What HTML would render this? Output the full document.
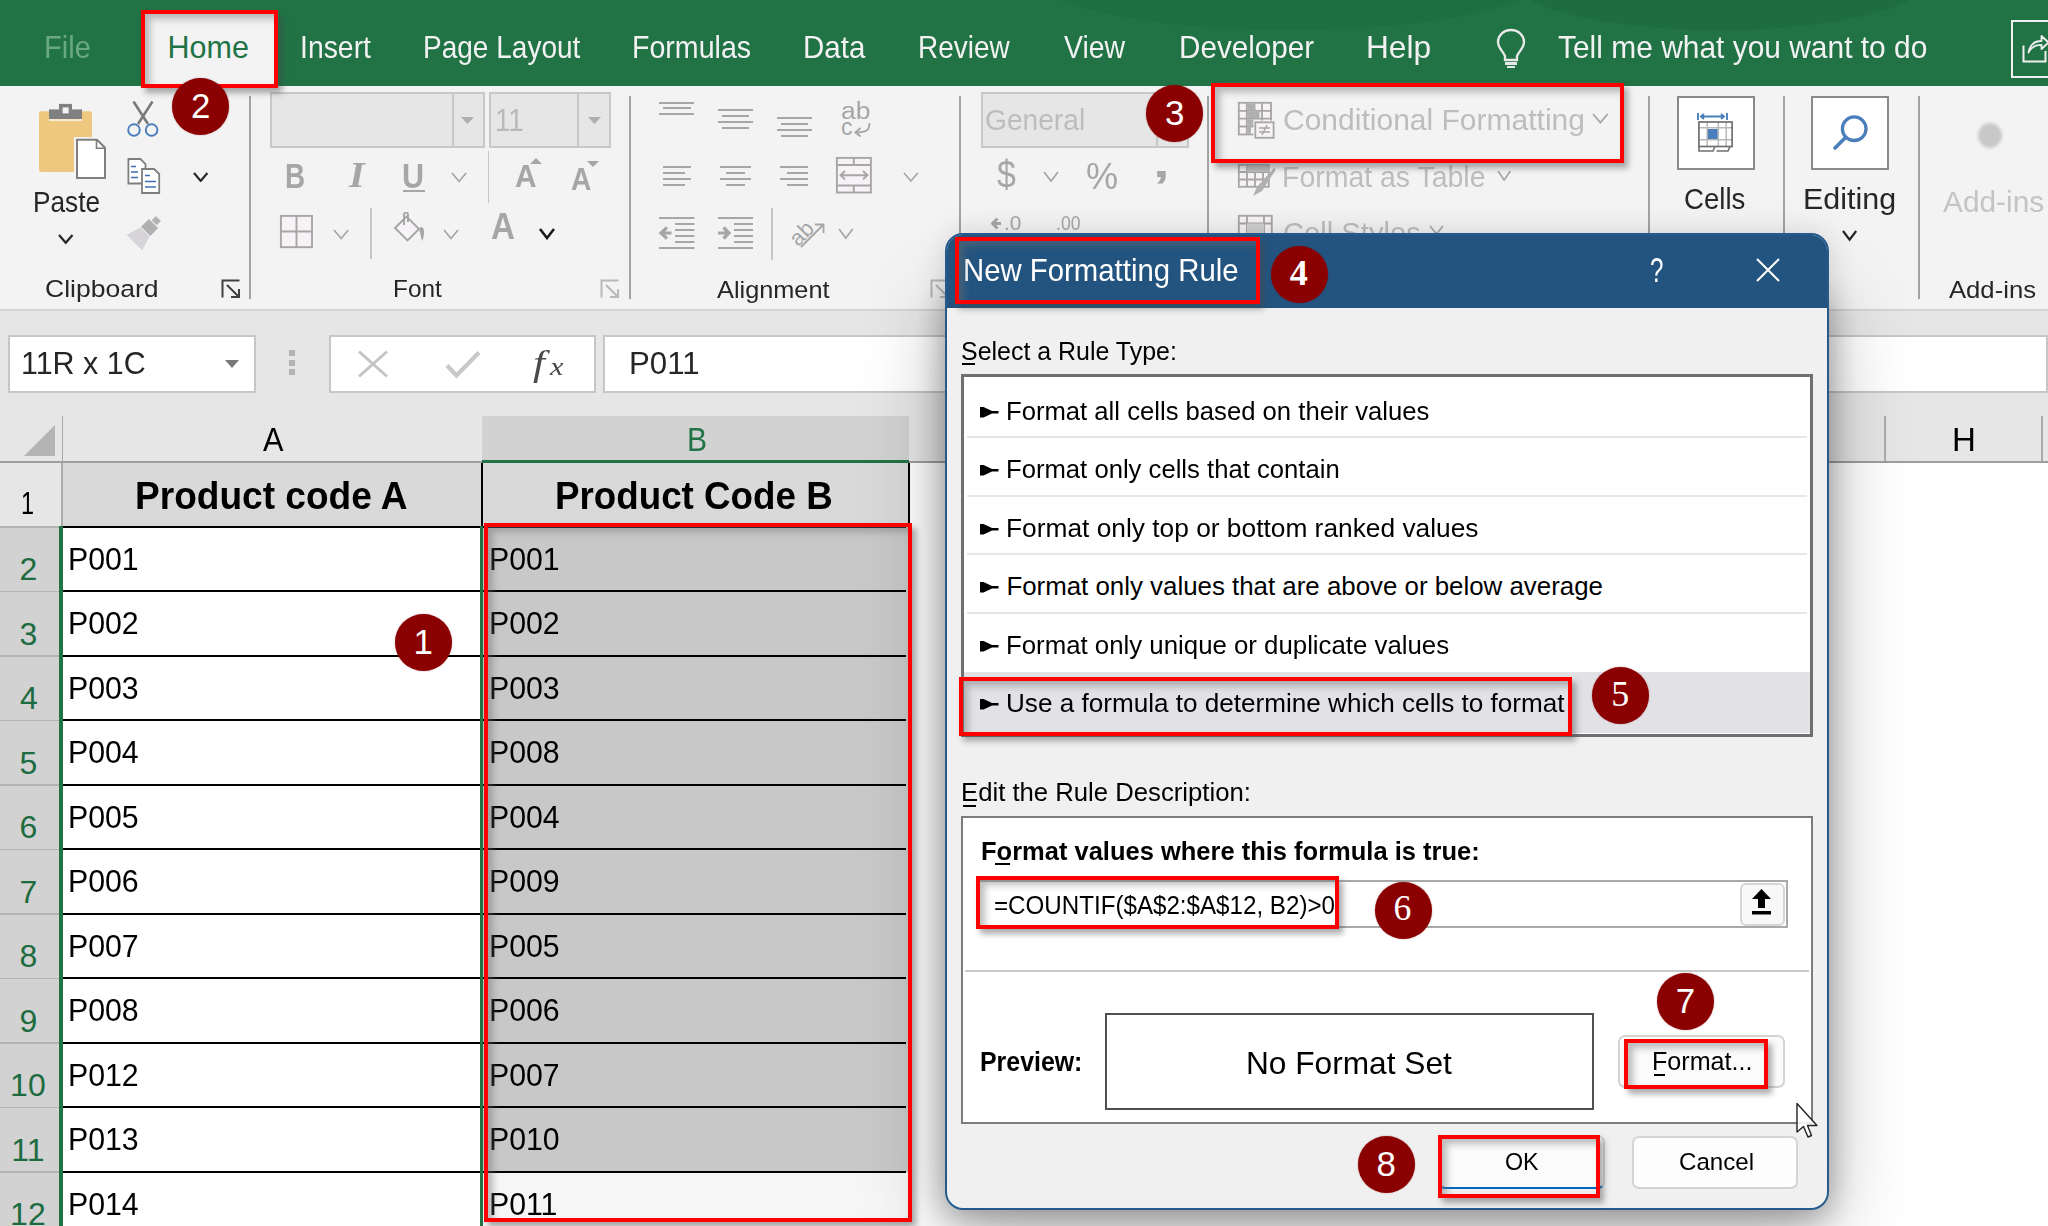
<!DOCTYPE html><html><head><meta charset="utf-8"><style>
*{margin:0;padding:0}
html,body{width:2048px;height:1226px;overflow:hidden;background:#fff;position:relative;font-family:"Liberation Sans",sans-serif}
.a{position:absolute}
.t{position:absolute;white-space:pre;transform-origin:0 0}
.badge{position:absolute;border-radius:50%;background:#8b0000;box-shadow:0 0 1.5px rgba(120,0,0,.5)}
.rb{position:absolute;border:4px solid #ff0000;box-sizing:border-box;box-shadow:4px 5px 6px rgba(70,70,70,.45), inset 5px 5px 7px rgba(110,110,110,.45)}
</style></head><body><div class="a" style="left:0px;top:0px;width:2048px;height:86px;background:#217346;"></div>
<div class="a" style="left:1040px;top:-72px;width:500px;height:102px;border-radius:50%;background:#1f6a41;opacity:.55"></div>
<div class="a" style="left:1510px;top:-74px;width:420px;height:104px;border-radius:50%;background:#1e6640;opacity:.6"></div>
<div class="a" style="left:141px;top:10px;width:137px;height:78px;background:#f3f3f3;"></div>
<div class="t" style="left:44.10px;top:32.16px;font-size:30.524px;line-height:30.524px;color:#6aa882;font-weight:normal;font-style:normal;transform:scaleX(0.9524);">File</div>
<div class="t" style="left:167.50px;top:32.16px;font-size:30.524px;line-height:30.524px;color:#217346;font-weight:normal;font-style:normal;">Home</div>
<div class="t" style="left:299.94px;top:32.16px;font-size:30.524px;line-height:30.524px;color:#f2f2f2;font-weight:normal;font-style:normal;transform:scaleX(0.9300);">Insert</div>
<div class="t" style="left:423.16px;top:32.16px;font-size:30.524px;line-height:30.524px;color:#f2f2f2;font-weight:normal;font-style:normal;transform:scaleX(0.9182);">Page Layout</div>
<div class="t" style="left:632.13px;top:32.16px;font-size:30.524px;line-height:30.524px;color:#f2f2f2;font-weight:normal;font-style:normal;transform:scaleX(0.9366);">Formulas</div>
<div class="t" style="left:802.67px;top:32.16px;font-size:30.524px;line-height:30.524px;color:#f2f2f2;font-weight:normal;font-style:normal;transform:scaleX(0.9666);">Data</div>
<div class="t" style="left:918.17px;top:32.16px;font-size:30.524px;line-height:30.524px;color:#f2f2f2;font-weight:normal;font-style:normal;transform:scaleX(0.9160);">Review</div>
<div class="t" style="left:1064.00px;top:32.16px;font-size:30.524px;line-height:30.524px;color:#f2f2f2;font-weight:normal;font-style:normal;transform:scaleX(0.9316);">View</div>
<div class="t" style="left:1178.76px;top:32.16px;font-size:30.524px;line-height:30.524px;color:#f2f2f2;font-weight:normal;font-style:normal;transform:scaleX(0.9713);">Developer</div>
<div class="t" style="left:1365.93px;top:32.16px;font-size:30.524px;line-height:30.524px;color:#f2f2f2;font-weight:normal;font-style:normal;transform:scaleX(1.0370);">Help</div>
<div class="t" style="left:1557.60px;top:32.16px;font-size:30.524px;line-height:30.524px;color:#f2f2f2;font-weight:normal;font-style:normal;transform:scaleX(0.9809);">Tell me what you want to do</div>
<svg class="a" style="left:1494px;top:27px;" width="34" height="44" viewBox="0 0 34 44"><path d="M17 3 C9 3 4 9 4 15 C4 21 9 24 11 29 L11 33 L23 33 L23 29 C25 24 30 21 30 15 C30 9 25 3 17 3 Z" fill="none" stroke="#e8e8e8" stroke-width="2.4"/><rect x="11" y="35" width="12" height="3" fill="#e8e8e8"/><rect x="13" y="39" width="8" height="2" fill="#e8e8e8"/></svg>
<div class="a" style="left:2011px;top:20px;width:60px;height:58px;border:2px solid #f0f0f0;box-sizing:border-box"></div>
<svg class="a" style="left:2018px;top:30px;" width="30" height="40" viewBox="0 0 30 40"><path d="M5.5 15.5 L5.5 31.5 L27.5 31.5 L27.5 21" fill="none" stroke="#f0f0f0" stroke-width="2"/><path d="M10.5 22.5 C12 14.5 17 11 23.5 11 L23.5 6 L30.5 12.5 L23.5 19 L23.5 14.8 C17.5 14.8 13 17.5 10.5 22.5 Z" fill="none" stroke="#f0f0f0" stroke-width="1.8" stroke-linejoin="round"/></svg>
<div class="a" style="left:0px;top:86px;width:2048px;height:223px;background:#f3f3f3;"></div>
<div class="a" style="left:0px;top:309px;width:2048px;height:2px;background:#d4d4d4;"></div>
<div class="a" style="left:0px;top:311px;width:2048px;height:151px;background:#e6e6e6;"></div>
<div class="a" style="left:249px;top:96px;width:2px;height:203px;background:#a3a3a3;"></div>
<div class="a" style="left:629px;top:96px;width:2px;height:203px;background:#a3a3a3;"></div>
<div class="a" style="left:959px;top:96px;width:2px;height:203px;background:#a3a3a3;"></div>
<div class="a" style="left:1207px;top:96px;width:2px;height:203px;background:#a3a3a3;"></div>
<div class="a" style="left:1648px;top:96px;width:2px;height:203px;background:#a3a3a3;"></div>
<div class="a" style="left:1783px;top:96px;width:2px;height:203px;background:#a3a3a3;"></div>
<div class="a" style="left:1918px;top:96px;width:2px;height:203px;background:#a3a3a3;"></div>
<div class="t" style="left:44.93px;top:277.28px;font-size:24.710px;line-height:24.710px;color:#262626;font-weight:normal;font-style:normal;transform:scaleX(1.0731);">Clipboard</div>
<div class="t" style="left:392.73px;top:277.18px;font-size:24.710px;line-height:24.710px;color:#262626;font-weight:normal;font-style:normal;transform:scaleX(0.9860);">Font</div>
<div class="t" style="left:716.60px;top:277.78px;font-size:24.710px;line-height:24.710px;color:#262626;font-weight:normal;font-style:normal;transform:scaleX(1.0247);">Alignment</div>
<div class="t" style="left:1948.80px;top:277.58px;font-size:24.710px;line-height:24.710px;color:#262626;font-weight:normal;font-style:normal;transform:scaleX(1.0383);">Add-ins</div>
<svg class="a" style="left:38px;top:102px;" width="70" height="78" viewBox="0 0 70 78">
      <rect x="1" y="9.3" width="53" height="60.7" rx="2" fill="#edc87e"/>
      <rect x="11" y="7.4" width="33" height="9.7" fill="#808080"/>
      <rect x="21" y="1.9" width="13" height="6" fill="#808080"/>
      <rect x="24.6" y="5.4" width="6" height="6" fill="#f3f3f3"/>
      <rect x="11" y="17.1" width="33" height="2" fill="#f7ebd0"/>
      <rect x="36" y="35" width="32" height="42" fill="#f3f3f3"/>
      <path d="M39 37.7 L59 37.7 L67 45.7 L67 75.9 L39 75.9 Z" fill="#fff" stroke="#7f7f7f" stroke-width="2"/>
      <path d="M58.5 37.7 L58.5 46.2 L67 46.2" fill="none" stroke="#7f7f7f" stroke-width="1.6"/></svg>
<div class="t" style="left:32.74px;top:187.27px;font-size:29.797px;line-height:29.797px;color:#262626;font-weight:normal;font-style:normal;transform:scaleX(0.8805);">Paste</div>
<svg class="a" style="left:56.7px;top:233.3px;" width="17.5" height="11.799999999999983" viewBox="0 0 17.5 11.799999999999983"><path d="M2 2 L8.75 9.799999999999983 L15.5 2" fill="none" stroke="#262626" stroke-width="2.2"/></svg>
<svg class="a" style="left:126px;top:100px;" width="34" height="38" viewBox="0 0 34 38">
      <path d="M7.5 1.5 L22 24 M26.5 1.5 L12 24" stroke="#7a7a7a" stroke-width="2.6" fill="none"/>
      <circle cx="8" cy="30" r="5.8" fill="none" stroke="#4a7ebb" stroke-width="1.9"/>
      <circle cx="25.6" cy="30" r="5.8" fill="none" stroke="#4a7ebb" stroke-width="1.9"/></svg>
<svg class="a" style="left:126px;top:157px;" width="36" height="38" viewBox="0 0 36 38">
      <path d="M2.4 2 L14.5 2 L19.5 7 L19.5 26.5 L2.4 26.5 Z" fill="#fff" stroke="#7f7f7f" stroke-width="1.8"/>
      <path d="M5 9.5 H10 M5 15 H12 M5 20.5 H12" stroke="#3e6fb0" stroke-width="1.6"/>
      <path d="M16 12 L28 12 L33.2 17 L33.2 36 L16 36 Z" fill="#fff" stroke="#7f7f7f" stroke-width="1.8"/>
      <path d="M19 18.5 H24 M19 24.5 H30 M19 30 H30" stroke="#3e6fb0" stroke-width="1.6"/></svg>
<svg class="a" style="left:191.6px;top:170.6px;" width="17.400000000000006" height="11.900000000000006" viewBox="0 0 17.400000000000006 11.900000000000006"><path d="M2 2 L8.700000000000003 9.900000000000006 L15.400000000000006 2" fill="none" stroke="#262626" stroke-width="2.2"/></svg>
<svg class="a" style="left:126px;top:214px;" width="38" height="36" viewBox="0 0 38 36">
      <g transform="translate(19 18) rotate(45)">
      <rect x="-3.5" y="-19" width="7" height="6" fill="#b4b4b4"/>
      <rect x="-6.5" y="-12" width="13" height="11" fill="#b0b0b0"/>
      <path d="M-6.5 0 L6.5 0 L11 15 L-11 15 Z" fill="#d6d4d8"/>
      </g></svg>
<svg class="a" style="left:220.5px;top:279px;" width="21" height="20" viewBox="0 0 21 20"><path d="M1.5 18.5 L1.5 1.5 L18.5 1.5" fill="none" stroke="#404040" stroke-width="2"/><path d="M6 6 L18 18 M18 10 L18 18 L10 18" fill="none" stroke="#404040" stroke-width="2"/></svg>
<svg class="a" style="left:600px;top:279px;" width="21" height="20" viewBox="0 0 21 20"><path d="M1.5 18.5 L1.5 1.5 L18.5 1.5" fill="none" stroke="#b8b8b8" stroke-width="2"/><path d="M6 6 L18 18 M18 10 L18 18 L10 18" fill="none" stroke="#b8b8b8" stroke-width="2"/></svg>
<svg class="a" style="left:930px;top:279px;" width="21" height="20" viewBox="0 0 21 20"><path d="M1.5 18.5 L1.5 1.5 L18.5 1.5" fill="none" stroke="#b8b8b8" stroke-width="2"/><path d="M6 6 L18 18 M18 10 L18 18 L10 18" fill="none" stroke="#b8b8b8" stroke-width="2"/></svg>
<div class="a" style="left:270px;top:92.3px;width:215px;height:56.000000000000014px;background:#e6e6e6;border:2px solid #c8c8c8;box-sizing:border-box;"></div>
<div class="a" style="left:452px;top:92.3px;width:2px;height:56.000000000000014px;background:#c8c8c8;"></div>
<svg class="a" style="left:461px;top:117px;" width="13" height="7" viewBox="0 0 13 7"><path d="M0 0 L13 0 L6.5 7Z" fill="#b0b0b0"/></svg>
<div class="a" style="left:489px;top:92.3px;width:121.5px;height:56.000000000000014px;background:#e6e6e6;border:2px solid #c8c8c8;box-sizing:border-box;"></div>
<div class="a" style="left:577px;top:92.3px;width:2px;height:56.000000000000014px;background:#c8c8c8;"></div>
<svg class="a" style="left:588px;top:117px;" width="13" height="7" viewBox="0 0 13 7"><path d="M0 0 L13 0 L6.5 7Z" fill="#b0b0b0"/></svg>
<div class="t" style="left:495.19px;top:104.76px;font-size:30.524px;line-height:30.524px;color:#b9b9b9;font-weight:normal;font-style:normal;transform:scaleX(0.9057);">11</div>
<div class="t" style="left:285.47px;top:159.08px;font-size:34.158px;line-height:34.158px;color:#a6a6a6;font-weight:bold;font-style:normal;transform:scaleX(0.8136);">B</div>
<div class="t" style="left:348.92px;top:157.95px;font-size:35.890px;line-height:35.890px;color:#a6a6a6;font-weight:bold;font-style:italic;font-family:'Liberation Serif',serif;transform:scaleX(1.1187);">I</div>
<div class="t" style="left:402.41px;top:159.08px;font-size:34.158px;line-height:34.158px;color:#a6a6a6;font-weight:bold;font-style:normal;transform:scaleX(0.8952);">U</div>
<div class="a" style="left:403px;top:189.7px;width:21.69999999999999px;height:2.200000000000017px;background:#a6a6a6;"></div>
<svg class="a" style="left:449.5px;top:170.6px;" width="18.19999999999999" height="12.5" viewBox="0 0 18.19999999999999 12.5"><path d="M2 2 L9.099999999999994 10.5 L16.19999999999999 2" fill="none" stroke="#a6a6a6" stroke-width="1.7"/></svg>
<div class="a" style="left:487.5px;top:151px;width:1.5px;height:52px;background:#c6c6c6;"></div>
<div class="t" style="left:514.70px;top:161.26px;font-size:31.105px;line-height:31.105px;color:#a6a6a6;font-weight:bold;font-style:normal;transform:scaleX(0.9591);">A</div>
<svg class="a" style="left:530px;top:158px;" width="12" height="6" viewBox="0 0 12 6"><path d="M0 6 L12 6 L6 0Z" fill="#a6a6a6"/></svg>
<div class="t" style="left:571.10px;top:163.63px;font-size:30.669px;line-height:30.669px;color:#a6a6a6;font-weight:bold;font-style:normal;transform:scaleX(0.9182);">A</div>
<svg class="a" style="left:587px;top:160.5px;" width="12" height="6" viewBox="0 0 12 6"><path d="M0 0 L12 0 L6 6Z" fill="#a6a6a6"/></svg>
<svg class="a" style="left:279px;top:214px;" width="35" height="35" viewBox="0 0 35 35"><rect x="1.9" y="1.9" width="31.1" height="31.3" fill="#f6f2f6" stroke="#a6a6a6" stroke-width="1.9"/><path d="M17.5 2 V33 M2 17.5 H33" stroke="#a6a6a6" stroke-width="1.9"/></svg>
<svg class="a" style="left:332px;top:227.5px;" width="18.30000000000001" height="12.5" viewBox="0 0 18.30000000000001 12.5"><path d="M2 2 L9.150000000000006 10.5 L16.30000000000001 2" fill="none" stroke="#a6a6a6" stroke-width="1.7"/></svg>
<div class="a" style="left:370px;top:207.8px;width:1.6000000000000227px;height:51.599999999999966px;background:#c6c6c6;"></div>
<svg class="a" style="left:392px;top:212px;" width="34" height="34" viewBox="0 0 34 34">
      <path d="M3 16 L14.5 4.5 L27 17 L15.5 28.5 Z" fill="#f6f2f6" stroke="#a6a6a6" stroke-width="1.9"/>
      <path d="M12 13 L12 2.5 A2 2 0 0 1 16 2.5 L16 10" fill="none" stroke="#a6a6a6" stroke-width="1.9"/>
      <path d="M27 17 C30 13 32 16 32 20 C32 24 31 28 30 29 C29 25 28 20 27 17Z" fill="#a6a6a6"/></svg>
<svg class="a" style="left:442px;top:227.5px;" width="18" height="12.5" viewBox="0 0 18 12.5"><path d="M2 2 L9.0 10.5 L16 2" fill="none" stroke="#a6a6a6" stroke-width="1.7"/></svg>
<div class="t" style="left:490.80px;top:209.19px;font-size:36.629px;line-height:36.629px;color:#a6a6a6;font-weight:bold;font-style:normal;transform:scaleX(0.9077);">A</div>
<svg class="a" style="left:537.7px;top:227px;" width="18.0" height="13" viewBox="0 0 18.0 13"><path d="M2 2 L9.0 11 L16.0 2" fill="none" stroke="#1a1a1a" stroke-width="2.6"/></svg>
<div class="a" style="left:659px;top:101.6px;width:35.39999999999998px;height:2.0px;background:#a6a6a6;"></div>
<div class="a" style="left:663px;top:107.4px;width:27.5px;height:2.0px;background:#a6a6a6;"></div>
<div class="a" style="left:659px;top:113.3px;width:35.39999999999998px;height:2.0px;background:#a6a6a6;"></div>
<div class="a" style="left:718px;top:109px;width:34.60000000000002px;height:2px;background:#a6a6a6;"></div>
<div class="a" style="left:722px;top:115px;width:26.5px;height:2px;background:#a6a6a6;"></div>
<div class="a" style="left:718px;top:121px;width:34.60000000000002px;height:2px;background:#a6a6a6;"></div>
<div class="a" style="left:722px;top:127px;width:26.5px;height:2px;background:#a6a6a6;"></div>
<div class="a" style="left:776.6px;top:117px;width:35.10000000000002px;height:2px;background:#a6a6a6;"></div>
<div class="a" style="left:780.5px;top:123px;width:27.0px;height:2px;background:#a6a6a6;"></div>
<div class="a" style="left:776.6px;top:129px;width:35.10000000000002px;height:2px;background:#a6a6a6;"></div>
<div class="a" style="left:780.5px;top:135px;width:27.0px;height:2px;background:#a6a6a6;"></div>
<div class="t" style="left:841.00px;top:99.63px;font-size:23.000px;line-height:23.000px;color:#a6a6a6;font-weight:normal;font-style:normal;transform:scaleX(1.1496);">ab</div>
<div class="t" style="left:841.00px;top:115.73px;font-size:23.000px;line-height:23.000px;color:#a6a6a6;font-weight:normal;font-style:normal;">c</div>
<svg class="a" style="left:853px;top:122px;" width="18" height="15" viewBox="0 0 18 15"><path d="M16.5 1 C16.5 8.5 13 10.5 3 10.5 M7.5 6 L2.5 10.5 L7.5 14.5" fill="none" stroke="#a6a6a6" stroke-width="1.9"/></svg>
<div class="a" style="left:663px;top:166px;width:27.600000000000023px;height:2px;background:#a6a6a6;"></div>
<div class="a" style="left:663px;top:172px;width:21.5px;height:2px;background:#a6a6a6;"></div>
<div class="a" style="left:663px;top:178px;width:27.600000000000023px;height:2px;background:#a6a6a6;"></div>
<div class="a" style="left:663px;top:184px;width:21.5px;height:2px;background:#a6a6a6;"></div>
<div class="a" style="left:720px;top:166px;width:31px;height:2px;background:#a6a6a6;"></div>
<div class="a" style="left:726px;top:172px;width:19px;height:2px;background:#a6a6a6;"></div>
<div class="a" style="left:720px;top:178px;width:31px;height:2px;background:#a6a6a6;"></div>
<div class="a" style="left:726px;top:184px;width:19px;height:2px;background:#a6a6a6;"></div>
<div class="a" style="left:780.4px;top:166px;width:27.399999999999977px;height:2px;background:#a6a6a6;"></div>
<div class="a" style="left:786.5px;top:172px;width:21.299999999999955px;height:2px;background:#a6a6a6;"></div>
<div class="a" style="left:780.4px;top:178px;width:27.399999999999977px;height:2px;background:#a6a6a6;"></div>
<div class="a" style="left:786.5px;top:184px;width:21.299999999999955px;height:2px;background:#a6a6a6;"></div>
<svg class="a" style="left:834.5px;top:156px;" width="38" height="38" viewBox="0 0 38 38">
      <rect x="1.9" y="1.9" width="34" height="34.6" fill="#f6f2f6" stroke="#a6a6a6" stroke-width="1.9"/>
      <path d="M2 9 H36 M2 29.5 H36 M18.8 2 V9 M18.8 29.5 V37" stroke="#a6a6a6" stroke-width="1.9"/>
      <path d="M6 19.2 H32 M10 15 L5.5 19.2 L10 23.4 M28 15 L32.5 19.2 L28 23.4" fill="none" stroke="#a6a6a6" stroke-width="1.9"/></svg>
<svg class="a" style="left:901.7px;top:170.8px;" width="17.799999999999955" height="12.0" viewBox="0 0 17.799999999999955 12.0"><path d="M2 2 L8.899999999999977 10.0 L15.799999999999955 2" fill="none" stroke="#a6a6a6" stroke-width="1.7"/></svg>
<svg class="a" style="left:658px;top:216px;" width="38" height="34" viewBox="0 0 38 34">
      <path d="M1 2 H36.4 M17 8 H36.4 M17 14 H36.4 M17 20 H36.4 M17 26 H36.4 M1 32 H36.4" stroke="#a6a6a6" stroke-width="2"/>
      <path d="M13.5 17 H4 M9 11.5 L3 17 L9 22.5" fill="none" stroke="#a6a6a6" stroke-width="3.2"/></svg>
<svg class="a" style="left:717px;top:216px;" width="38" height="34" viewBox="0 0 38 34">
      <path d="M1 2 H36 M17 8 H36 M17 14 H36 M17 20 H36 M17 26 H36 M1 32 H36" stroke="#a6a6a6" stroke-width="2"/>
      <path d="M1 17 H11 M6.5 11.5 L12 17 L6.5 22.5" fill="none" stroke="#a6a6a6" stroke-width="3.2"/></svg>
<div class="a" style="left:771px;top:207.6px;width:1.6000000000000227px;height:52.20000000000002px;background:#c6c6c6;"></div>
<svg class="a" style="left:789px;top:214px;" width="38" height="36" viewBox="0 0 38 36">
      <g transform="rotate(-45 14 17)"><text x="-1" y="25" font-family="Liberation Sans" font-size="22" fill="#a6a6a6">ab</text></g>
      <path d="M12 33 L34 11 M26 10.5 L34.5 10.5 L34.5 19" fill="none" stroke="#a6a6a6" stroke-width="1.8"/></svg>
<svg class="a" style="left:837px;top:227px;" width="17.700000000000045" height="13" viewBox="0 0 17.700000000000045 13"><path d="M2 2 L8.850000000000023 11 L15.700000000000045 2" fill="none" stroke="#a6a6a6" stroke-width="1.7"/></svg>
<div class="a" style="left:980.5px;top:92.3px;width:208.0px;height:56.000000000000014px;background:#e6e6e6;border:2px solid #c8c8c8;box-sizing:border-box;"></div>
<div class="a" style="left:1156px;top:92.3px;width:2px;height:56.000000000000014px;background:#c8c8c8;"></div>
<div class="t" style="left:985.47px;top:104.80px;font-size:30.233px;line-height:30.233px;color:#bdbdbd;font-weight:normal;font-style:normal;transform:scaleX(0.9314);">General</div>
<div class="t" style="left:997.00px;top:156.33px;font-size:38.000px;line-height:38.000px;color:#a6a6a6;font-weight:normal;font-style:normal;transform:scaleX(0.8905);">$</div>
<svg class="a" style="left:1042px;top:170px;" width="18" height="13" viewBox="0 0 18 13"><path d="M2 2 L9.0 11 L16 2" fill="none" stroke="#a6a6a6" stroke-width="1.7"/></svg>
<div class="t" style="left:1086.40px;top:159.22px;font-size:36.000px;line-height:36.000px;color:#a6a6a6;font-weight:normal;font-style:normal;transform:scaleX(1.0033);">%</div>
<div class="t" style="left:1153.00px;top:143.13px;font-size:40.000px;line-height:40.000px;color:#a6a6a6;font-weight:bold;font-style:normal;transform:scaleX(1.5000);">,</div>
<svg class="a" style="left:991px;top:215px;" width="32" height="17" viewBox="0 0 32 17"><path d="M10 8.5 H2 M6.5 3.5 L1.5 8.5 L6.5 13.5" fill="none" stroke="#a6a6a6" stroke-width="3"/></svg>
<div class="t" style="left:1003.98px;top:213.47px;font-size:20.349px;line-height:20.349px;color:#a6a6a6;font-weight:normal;font-style:normal;transform:scaleX(1.0225);">.0</div>
<div class="t" style="left:1055.84px;top:213.47px;font-size:20.349px;line-height:20.349px;color:#a6a6a6;font-weight:normal;font-style:normal;transform:scaleX(0.8645);">.00</div>
<svg class="a" style="left:1237px;top:101px;" width="40" height="39" viewBox="0 0 40 39">
      <rect x="1.8" y="1.8" width="32.2" height="31.7" fill="#f6f2f6" stroke="#a6a6a6" stroke-width="1.8"/>
      <path d="M1.8 9.8 H34 M1.8 17.6 H34 M1.8 25.5 H34 M9.8 1.8 V33.5 M25 1.8 V33.5" stroke="#a6a6a6" stroke-width="1.8"/>
      <rect x="10.5" y="2.5" width="8" height="7" fill="#b0b0b0"/><rect x="10.5" y="10.5" width="12" height="6.5" fill="#b0b0b0"/>
      <rect x="10.5" y="18.3" width="6" height="6.5" fill="#b0b0b0"/><rect x="10.5" y="26.2" width="3.5" height="6.6" fill="#b0b0b0"/>
      <rect x="16.5" y="19.5" width="22" height="19" fill="#f3f3f3"/>
      <rect x="18.3" y="21.3" width="18.3" height="15.5" fill="#f6f2f6" stroke="#a6a6a6" stroke-width="1.8"/>
      <path d="M22 27 H33 M22 31 H33 M30 24 L25 34" stroke="#a6a6a6" stroke-width="1.5"/></svg>
<div class="t" style="left:1282.59px;top:104.77px;font-size:29.797px;line-height:29.797px;color:#bdbdbd;font-weight:normal;font-style:normal;transform:scaleX(1.0079);">Conditional Formatting</div>
<svg class="a" style="left:1591px;top:112px;" width="18.700000000000045" height="12.599999999999994" viewBox="0 0 18.700000000000045 12.599999999999994"><path d="M2 2 L9.350000000000023 10.599999999999994 L16.700000000000045 2" fill="none" stroke="#a6a6a6" stroke-width="1.7"/></svg>
<svg class="a" style="left:1237px;top:163px;" width="40" height="34" viewBox="0 0 40 34">
      <rect x="1.8" y="1.8" width="30" height="22" fill="#f6f2f6" stroke="#a6a6a6" stroke-width="1.8"/>
      <path d="M1.8 9 H32 M1.8 16.5 H32 M10 1.8 V24 M18 1.8 V24 M26 1.8 V24" stroke="#a6a6a6" stroke-width="1.8"/>
      <rect x="10" y="2" width="22" height="7" fill="#bdbdbd"/>
      <path d="M38 4 L20 24 L16 33 L25 28 L38 8Z" fill="#b0b0b0"/></svg>
<div class="t" style="left:1282.07px;top:162.32px;font-size:29.506px;line-height:29.506px;color:#bdbdbd;font-weight:normal;font-style:normal;transform:scaleX(0.9646);">Format as Table</div>
<svg class="a" style="left:1495.6px;top:168.5px;" width="16.40000000000009" height="13.0" viewBox="0 0 16.40000000000009 13.0"><path d="M2 2 L8.200000000000045 11.0 L14.400000000000091 2" fill="none" stroke="#a6a6a6" stroke-width="1.7"/></svg>
<svg class="a" style="left:1237px;top:214px;" width="40" height="20" viewBox="0 0 40 20">
      <rect x="1.8" y="1.8" width="33" height="30" fill="#f6f2f6" stroke="#a6a6a6" stroke-width="1.8"/>
      <path d="M1.8 9.5 H35 M10 1.8 V32 M27 1.8 V32" stroke="#a6a6a6" stroke-width="1.8"/>
      <rect x="10" y="9.5" width="17" height="12" fill="#d0d0d0"/></svg>
<div class="t" style="left:1283.01px;top:217.52px;font-size:29.506px;line-height:29.506px;color:#bdbdbd;font-weight:normal;font-style:normal;transform:scaleX(0.9884);">Cell Styles</div>
<svg class="a" style="left:1428px;top:224px;" width="17" height="12" viewBox="0 0 17 12"><path d="M2 2 L8.5 10 L15 2" fill="none" stroke="#a6a6a6" stroke-width="1.7"/></svg>
<div class="a" style="left:1676.5px;top:96.4px;width:78.0px;height:73.29999999999998px;background:#fff;border:2px solid #8a8a8a;box-sizing:border-box;"></div>
<svg class="a" style="left:1696px;top:112px;" width="40" height="42" viewBox="0 0 40 42">
      <path d="M2 1 V8 M31 1 V8 M5.5 4.5 H27.5 M8 2 L5 4.5 L8 7 M25 2 L28 4.5 L25 7" fill="none" stroke="#4a7ebb" stroke-width="1.9"/>
      <path d="M11.2 9.5 V34 M22.3 9.5 V34 M30.2 9.5 V34 M2.5 15.7 H36 M2.5 27.8 H36" stroke="#b8b8b8" stroke-width="1.5"/>
      <rect x="2.9" y="10" width="33.2" height="24.5" fill="none" stroke="#707070" stroke-width="1.7"/>
      <rect x="11.8" y="17" width="9.8" height="10" fill="#4a7ebb"/>
      <path d="M3 34.5 V39 H17 L19 34.5 M20.5 39 H32 L34 34.5" fill="none" stroke="#707070" stroke-width="1.6"/></svg>
<div class="t" style="left:1683.86px;top:184.02px;font-size:29.506px;line-height:29.506px;color:#262626;font-weight:normal;font-style:normal;transform:scaleX(0.9370);">Cells</div>
<div class="a" style="left:1811.3px;top:96.4px;width:78.10000000000014px;height:73.29999999999998px;background:#fff;border:2px solid #8a8a8a;box-sizing:border-box;"></div>
<svg class="a" style="left:1830px;top:112px;" width="42" height="42" viewBox="0 0 42 42">
      <circle cx="24.2" cy="16.7" r="11.8" fill="none" stroke="#4a7ebb" stroke-width="3.3"/>
      <path d="M15.5 25.5 L5 36" stroke="#4a7ebb" stroke-width="3.6" stroke-linecap="round"/></svg>
<div class="t" style="left:1802.94px;top:184.02px;font-size:29.506px;line-height:29.506px;color:#262626;font-weight:normal;font-style:normal;transform:scaleX(1.0323);">Editing</div>
<svg class="a" style="left:1840.8px;top:229.4px;" width="17.200000000000045" height="12.599999999999994" viewBox="0 0 17.200000000000045 12.599999999999994"><path d="M2 2 L8.600000000000023 10.599999999999994 L15.200000000000045 2" fill="none" stroke="#262626" stroke-width="2.2"/></svg>
<div class="a" style="left:1978px;top:123px;width:24px;height:25px;border-radius:50%;background:#c8c8c8;filter:blur(1.5px)"></div>
<div class="t" style="left:1942.80px;top:187.89px;font-size:29.070px;line-height:29.070px;color:#c4c4c4;font-weight:normal;font-style:normal;transform:scaleX(1.0264);">Add-ins</div>
<div class="a" style="left:8px;top:335px;width:248px;height:58px;background:#fff;border:2px solid #c6c6c6;box-sizing:border-box;"></div>
<div class="t" style="left:20.73px;top:349.09px;font-size:30.960px;line-height:30.960px;color:#262626;font-weight:normal;font-style:normal;transform:scaleX(0.9833);">11R x 1C</div>
<svg class="a" style="left:225px;top:360px;" width="14" height="8" viewBox="0 0 14 8"><path d="M0 0 L14 0 L7 8Z" fill="#7a7a7a"/></svg>
<div class="a" style="left:289px;top:350px;width:6px;height:6px;background:#b4b4b4;"></div>
<div class="a" style="left:289px;top:360px;width:6px;height:6px;background:#b4b4b4;"></div>
<div class="a" style="left:289px;top:369px;width:6px;height:6px;background:#b4b4b4;"></div>
<div class="a" style="left:329px;top:335px;width:267px;height:58px;background:#fff;border:2px solid #c6c6c6;box-sizing:border-box;"></div>
<div class="a" style="left:603px;top:335px;width:1445px;height:58px;background:#fff;border:2px solid #c6c6c6;box-sizing:border-box;"></div>
<svg class="a" style="left:357px;top:350px;" width="32" height="28" viewBox="0 0 32 28"><path d="M2 1.5 L30 26.5 M30 1.5 L2 26.5" stroke="#c4c4c4" stroke-width="3"/></svg>
<svg class="a" style="left:445px;top:350px;" width="36" height="30" viewBox="0 0 36 30"><path d="M2 15.5 L11.5 25.5 L34 2.5" fill="none" stroke="#c8c8c8" stroke-width="4.2"/></svg>
<div class="t" style="left:533.00px;top:344.85px;font-size:36.000px;line-height:36.000px;color:#4a4a4a;font-weight:normal;font-style:italic;font-family:'Liberation Serif',serif;transform:scaleX(1.2000);">f</div>
<div class="t" style="left:550.22px;top:354.06px;font-size:25.000px;line-height:25.000px;color:#4a4a4a;font-weight:normal;font-style:italic;font-family:'Liberation Serif',serif;transform:scaleX(1.2167);">x</div>
<div class="t" style="left:629.28px;top:349.19px;font-size:30.960px;line-height:30.960px;color:#262626;font-weight:normal;font-style:normal;transform:scaleX(1.0078);">P011</div>
<div class="a" style="left:0px;top:462px;width:2048px;height:764px;background:#ffffff;"></div>
<div class="a" style="left:482px;top:416px;width:427px;height:46px;background:#d2d2d2;"></div>
<div class="a" style="left:62px;top:416px;width:1px;height:46px;background:#ababab;"></div>
<div class="a" style="left:1884px;top:416px;width:2px;height:46px;background:#ababab;"></div>
<div class="a" style="left:2041px;top:416px;width:2px;height:46px;background:#ababab;"></div>
<div class="a" style="left:0px;top:461px;width:2048px;height:2px;background:#9e9e9e;"></div>
<div class="a" style="left:482px;top:459.5px;width:427px;height:3.5px;background:#217346;"></div>
<svg class="a" style="left:24px;top:425px;" width="31" height="31" viewBox="0 0 31 31"><path d="M31 0 L31 31 L0 31Z" fill="#b4b4b4"/></svg>
<div class="t" style="left:262.50px;top:422.99px;font-size:33.431px;line-height:33.431px;color:#000;font-weight:normal;font-style:normal;transform:scaleX(0.9174);">A</div>
<div class="t" style="left:686.50px;top:423.19px;font-size:33.431px;line-height:33.431px;color:#217346;font-weight:normal;font-style:normal;transform:scaleX(0.9000);">B</div>
<div class="t" style="left:1952.02px;top:422.99px;font-size:33.431px;line-height:33.431px;color:#000;font-weight:normal;font-style:normal;transform:scaleX(0.9900);">H</div>
<div class="a" style="left:0px;top:463px;width:62px;height:63.5px;background:#e6e6e6;"></div>
<div class="a" style="left:61px;top:463px;width:1.5px;height:63.5px;background:#ababab;"></div>
<div class="a" style="left:0px;top:526.5px;width:59px;height:699.5px;background:#d2d2d2;"></div>
<div class="a" style="left:59px;top:526px;width:3.5px;height:700px;background:#217346;"></div>
<div class="t" style="left:20.53px;top:486.73px;font-size:31.977px;line-height:31.977px;color:#000;font-weight:normal;font-style:normal;transform:scaleX(0.7333);">1</div>
<div class="a" style="left:0px;top:526.0px;width:59px;height:1.5px;background:#b3b3b3;"></div>
<div class="t" style="left:19.50px;top:553.23px;font-size:31.977px;line-height:31.977px;color:#1d6b40;font-weight:normal;font-style:normal;">2</div>
<div class="a" style="left:0px;top:590.5px;width:59px;height:1.5px;background:#b3b3b3;"></div>
<div class="t" style="left:19.50px;top:617.73px;font-size:31.977px;line-height:31.977px;color:#1d6b40;font-weight:normal;font-style:normal;">3</div>
<div class="a" style="left:0px;top:655.0px;width:59px;height:1.5px;background:#b3b3b3;"></div>
<div class="t" style="left:20.00px;top:682.23px;font-size:31.977px;line-height:31.977px;color:#1d6b40;font-weight:normal;font-style:normal;">4</div>
<div class="a" style="left:0px;top:719.5px;width:59px;height:1.5px;background:#b3b3b3;"></div>
<div class="t" style="left:19.50px;top:746.73px;font-size:31.977px;line-height:31.977px;color:#1d6b40;font-weight:normal;font-style:normal;">5</div>
<div class="a" style="left:0px;top:784.0px;width:59px;height:1.5px;background:#b3b3b3;"></div>
<div class="t" style="left:19.50px;top:811.23px;font-size:31.977px;line-height:31.977px;color:#1d6b40;font-weight:normal;font-style:normal;">6</div>
<div class="a" style="left:0px;top:848.5px;width:59px;height:1.5px;background:#b3b3b3;"></div>
<div class="t" style="left:19.50px;top:875.73px;font-size:31.977px;line-height:31.977px;color:#1d6b40;font-weight:normal;font-style:normal;">7</div>
<div class="a" style="left:0px;top:913.0px;width:59px;height:1.5px;background:#b3b3b3;"></div>
<div class="t" style="left:19.50px;top:940.23px;font-size:31.977px;line-height:31.977px;color:#1d6b40;font-weight:normal;font-style:normal;">8</div>
<div class="a" style="left:0px;top:977.5px;width:59px;height:1.5px;background:#b3b3b3;"></div>
<div class="t" style="left:19.50px;top:1004.73px;font-size:31.977px;line-height:31.977px;color:#1d6b40;font-weight:normal;font-style:normal;">9</div>
<div class="a" style="left:0px;top:1042.0px;width:59px;height:1.5px;background:#b3b3b3;"></div>
<div class="t" style="left:10.11px;top:1069.23px;font-size:31.977px;line-height:31.977px;color:#1d6b40;font-weight:normal;font-style:normal;">10</div>
<div class="a" style="left:0px;top:1106.5px;width:59px;height:1.5px;background:#b3b3b3;"></div>
<div class="t" style="left:11.30px;top:1133.73px;font-size:31.977px;line-height:31.977px;color:#1d6b40;font-weight:normal;font-style:normal;">11</div>
<div class="a" style="left:0px;top:1171.0px;width:59px;height:1.5px;background:#b3b3b3;"></div>
<div class="t" style="left:10.11px;top:1198.23px;font-size:31.977px;line-height:31.977px;color:#1d6b40;font-weight:normal;font-style:normal;">12</div>
<div class="a" style="left:62.5px;top:463px;width:846.5px;height:63.5px;background:#d9d9d9;"></div>
<div class="a" style="left:481px;top:463px;width:1.5px;height:63.5px;background:#000;"></div>
<div class="a" style="left:907.5px;top:463px;width:2.0px;height:63.5px;background:#000;"></div>
<div class="t" style="left:135.47px;top:477.39px;font-size:38.518px;line-height:38.518px;color:#000;font-weight:bold;font-style:normal;transform:scaleX(0.9627);">Product code A</div>
<div class="t" style="left:555.09px;top:477.39px;font-size:38.518px;line-height:38.518px;color:#000;font-weight:bold;font-style:normal;transform:scaleX(0.9546);">Product Code B</div>
<div class="a" style="left:482.5px;top:526.5px;width:425.5px;height:645.5px;background:#c8c8c8;"></div>
<div class="a" style="left:482.5px;top:1172px;width:425.5px;height:54px;background:#f6f6f6;"></div>
<div class="a" style="left:62.5px;top:525.5px;width:843.5px;height:2.2000000000000455px;background:#000;"></div>
<div class="t" style="left:67.83px;top:544.51px;font-size:30.814px;line-height:30.814px;color:#000;font-weight:normal;font-style:normal;transform:scaleX(0.9830);">P001</div>
<div class="t" style="left:488.53px;top:544.51px;font-size:30.814px;line-height:30.814px;color:#000;font-weight:normal;font-style:normal;transform:scaleX(0.9830);">P001</div>
<div class="a" style="left:62.5px;top:590.0px;width:843.5px;height:2.2000000000000455px;background:#000;"></div>
<div class="t" style="left:67.83px;top:609.01px;font-size:30.814px;line-height:30.814px;color:#000;font-weight:normal;font-style:normal;transform:scaleX(0.9830);">P002</div>
<div class="t" style="left:488.53px;top:609.01px;font-size:30.814px;line-height:30.814px;color:#000;font-weight:normal;font-style:normal;transform:scaleX(0.9830);">P002</div>
<div class="a" style="left:62.5px;top:654.5px;width:843.5px;height:2.2000000000000455px;background:#000;"></div>
<div class="t" style="left:67.83px;top:673.51px;font-size:30.814px;line-height:30.814px;color:#000;font-weight:normal;font-style:normal;transform:scaleX(0.9830);">P003</div>
<div class="t" style="left:488.53px;top:673.51px;font-size:30.814px;line-height:30.814px;color:#000;font-weight:normal;font-style:normal;transform:scaleX(0.9830);">P003</div>
<div class="a" style="left:62.5px;top:719.0px;width:843.5px;height:2.2000000000000455px;background:#000;"></div>
<div class="t" style="left:67.83px;top:738.01px;font-size:30.814px;line-height:30.814px;color:#000;font-weight:normal;font-style:normal;transform:scaleX(0.9830);">P004</div>
<div class="t" style="left:488.53px;top:738.01px;font-size:30.814px;line-height:30.814px;color:#000;font-weight:normal;font-style:normal;transform:scaleX(0.9830);">P008</div>
<div class="a" style="left:62.5px;top:783.5px;width:843.5px;height:2.2000000000000455px;background:#000;"></div>
<div class="t" style="left:67.83px;top:802.51px;font-size:30.814px;line-height:30.814px;color:#000;font-weight:normal;font-style:normal;transform:scaleX(0.9830);">P005</div>
<div class="t" style="left:488.53px;top:802.51px;font-size:30.814px;line-height:30.814px;color:#000;font-weight:normal;font-style:normal;transform:scaleX(0.9830);">P004</div>
<div class="a" style="left:62.5px;top:848.0px;width:843.5px;height:2.2000000000000455px;background:#000;"></div>
<div class="t" style="left:67.83px;top:867.01px;font-size:30.814px;line-height:30.814px;color:#000;font-weight:normal;font-style:normal;transform:scaleX(0.9830);">P006</div>
<div class="t" style="left:488.53px;top:867.01px;font-size:30.814px;line-height:30.814px;color:#000;font-weight:normal;font-style:normal;transform:scaleX(0.9830);">P009</div>
<div class="a" style="left:62.5px;top:912.5px;width:843.5px;height:2.2000000000000455px;background:#000;"></div>
<div class="t" style="left:67.83px;top:931.51px;font-size:30.814px;line-height:30.814px;color:#000;font-weight:normal;font-style:normal;transform:scaleX(0.9830);">P007</div>
<div class="t" style="left:488.53px;top:931.51px;font-size:30.814px;line-height:30.814px;color:#000;font-weight:normal;font-style:normal;transform:scaleX(0.9830);">P005</div>
<div class="a" style="left:62.5px;top:977.0px;width:843.5px;height:2.2000000000000455px;background:#000;"></div>
<div class="t" style="left:67.83px;top:996.01px;font-size:30.814px;line-height:30.814px;color:#000;font-weight:normal;font-style:normal;transform:scaleX(0.9830);">P008</div>
<div class="t" style="left:488.53px;top:996.01px;font-size:30.814px;line-height:30.814px;color:#000;font-weight:normal;font-style:normal;transform:scaleX(0.9830);">P006</div>
<div class="a" style="left:62.5px;top:1041.5px;width:843.5px;height:2.2000000000000455px;background:#000;"></div>
<div class="t" style="left:67.83px;top:1060.51px;font-size:30.814px;line-height:30.814px;color:#000;font-weight:normal;font-style:normal;transform:scaleX(0.9830);">P012</div>
<div class="t" style="left:488.53px;top:1060.51px;font-size:30.814px;line-height:30.814px;color:#000;font-weight:normal;font-style:normal;transform:scaleX(0.9830);">P007</div>
<div class="a" style="left:62.5px;top:1106.0px;width:843.5px;height:2.2000000000000455px;background:#000;"></div>
<div class="t" style="left:67.83px;top:1125.01px;font-size:30.814px;line-height:30.814px;color:#000;font-weight:normal;font-style:normal;transform:scaleX(0.9830);">P013</div>
<div class="t" style="left:488.53px;top:1125.01px;font-size:30.814px;line-height:30.814px;color:#000;font-weight:normal;font-style:normal;transform:scaleX(0.9830);">P010</div>
<div class="a" style="left:62.5px;top:1170.5px;width:843.5px;height:2.2000000000000455px;background:#000;"></div>
<div class="t" style="left:67.83px;top:1189.51px;font-size:30.814px;line-height:30.814px;color:#000;font-weight:normal;font-style:normal;transform:scaleX(0.9830);">P014</div>
<div class="t" style="left:488.53px;top:1189.51px;font-size:30.814px;line-height:30.814px;color:#000;font-weight:normal;font-style:normal;transform:scaleX(0.9830);">P011</div>
<div class="a" style="left:479.5px;top:526px;width:3.5px;height:700px;background:#217346;"></div>
<div class="a" style="left:945px;top:283px;width:884px;height:927px;border-radius:18px;box-shadow:0 10px 30px rgba(0,0,0,.2), 0 20px 80px 2px rgba(0,0,0,.27)"></div>
<div class="a" style="left:945px;top:233px;width:884px;height:977px;border-radius:18px;background:#f0f0f0;border:2px solid #245a8c;box-sizing:border-box;overflow:hidden;box-shadow:0 0 30px rgba(0,0,0,.13)"><div class="a" style="left:0;top:0;width:884px;height:73px;background:#23547f"></div></div>
<div class="t" style="left:963.38px;top:255.26px;font-size:30.524px;line-height:30.524px;color:#fff;font-weight:normal;font-style:normal;transform:scaleX(0.9614);">New Formatting Rule</div>
<div class="t" style="left:1650.29px;top:252.88px;font-size:34.158px;line-height:34.158px;color:#fff;font-weight:normal;font-style:normal;transform:scaleX(0.7059);">?</div>
<svg class="a" style="left:1756px;top:258px;" width="24" height="24" viewBox="0 0 24 24"><path d="M1 1 L23 23 M23 1 L1 23" stroke="#fff" stroke-width="2"/></svg>
<div class="t" style="left:961.41px;top:338.61px;font-size:25.146px;line-height:25.146px;color:#000;font-weight:normal;font-style:normal;transform:scaleX(0.9926);">Select a Rule Type:</div>
<div class="a" style="left:962.4px;top:362.5px;width:13.100000000000023px;height:2.0px;background:#000;"></div>
<div class="a" style="left:960.7px;top:373.5px;width:852.3px;height:363.0px;background:#fff;border:3.3px solid #6f6f6f;box-sizing:border-box;"></div>
<div class="a" style="left:964px;top:672.2px;width:845.5px;height:60.799999999999955px;background:#e1e1e6;"></div>
<div class="a" style="left:966.6px;top:436px;width:840.4px;height:2px;background:#e6e6e6;"></div>
<div class="a" style="left:966.6px;top:494.6px;width:840.4px;height:2.0px;background:#e6e6e6;"></div>
<div class="a" style="left:966.6px;top:553.2px;width:840.4px;height:2.0px;background:#e6e6e6;"></div>
<div class="a" style="left:966.6px;top:611.7px;width:840.4px;height:2.0px;background:#e6e6e6;"></div>
<div class="t" style="left:1006.42px;top:398.79px;font-size:25.873px;line-height:25.873px;color:#000;font-weight:normal;font-style:normal;transform:scaleX(0.9919);">Format all cells based on their values</div>
<svg class="a" style="left:979.5px;top:406.7px;" width="20" height="11" viewBox="0 0 20 11"><path d="M0 0 L3.5 0 L12 4 L18.5 4 L18.5 6.5 L12 6.5 L3.5 10.5 L0 10.5 Z" fill="#000"/></svg>
<div class="t" style="left:1006.42px;top:457.29px;font-size:25.873px;line-height:25.873px;color:#000;font-weight:normal;font-style:normal;transform:scaleX(0.9921);">Format only cells that contain</div>
<svg class="a" style="left:979.5px;top:465.2px;" width="20" height="11" viewBox="0 0 20 11"><path d="M0 0 L3.5 0 L12 4 L18.5 4 L18.5 6.5 L12 6.5 L3.5 10.5 L0 10.5 Z" fill="#000"/></svg>
<div class="t" style="left:1006.36px;top:515.79px;font-size:25.873px;line-height:25.873px;color:#000;font-weight:normal;font-style:normal;transform:scaleX(1.0177);">Format only top or bottom ranked values</div>
<svg class="a" style="left:979.5px;top:523.7px;" width="20" height="11" viewBox="0 0 20 11"><path d="M0 0 L3.5 0 L12 4 L18.5 4 L18.5 6.5 L12 6.5 L3.5 10.5 L0 10.5 Z" fill="#000"/></svg>
<div class="t" style="left:1006.40px;top:574.29px;font-size:25.873px;line-height:25.873px;color:#000;font-weight:normal;font-style:normal;">Format only values that are above or below average</div>
<svg class="a" style="left:979.5px;top:582.2px;" width="20" height="11" viewBox="0 0 20 11"><path d="M0 0 L3.5 0 L12 4 L18.5 4 L18.5 6.5 L12 6.5 L3.5 10.5 L0 10.5 Z" fill="#000"/></svg>
<div class="t" style="left:1006.40px;top:632.79px;font-size:25.873px;line-height:25.873px;color:#000;font-weight:normal;font-style:normal;transform:scaleX(0.9976);">Format only unique or duplicate values</div>
<svg class="a" style="left:979.5px;top:640.7px;" width="20" height="11" viewBox="0 0 20 11"><path d="M0 0 L3.5 0 L12 4 L18.5 4 L18.5 6.5 L12 6.5 L3.5 10.5 L0 10.5 Z" fill="#000"/></svg>
<div class="t" style="left:1006.38px;top:691.29px;font-size:25.873px;line-height:25.873px;color:#000;font-weight:normal;font-style:normal;transform:scaleX(1.0094);">Use a formula to determine which cells to format</div>
<svg class="a" style="left:979.5px;top:699.2px;" width="20" height="11" viewBox="0 0 20 11"><path d="M0 0 L3.5 0 L12 4 L18.5 4 L18.5 6.5 L12 6.5 L3.5 10.5 L0 10.5 Z" fill="#000"/></svg>
<div class="t" style="left:960.55px;top:780.11px;font-size:25.146px;line-height:25.146px;color:#000;font-weight:normal;font-style:normal;transform:scaleX(1.0225);">Edit the Rule Description:</div>
<div class="a" style="left:962.6px;top:804.5px;width:13.399999999999977px;height:2.0px;background:#000;"></div>
<div class="a" style="left:961px;top:816px;width:852px;height:308px;background:#fff;border:2px solid #7d7d7d;box-sizing:border-box;"></div>
<div class="t" style="left:980.73px;top:837.95px;font-size:26.163px;line-height:26.163px;color:#000;font-weight:bold;font-style:normal;transform:scaleX(0.9746);">Format values where this formula is true:</div>
<div class="a" style="left:995px;top:862.5px;width:15px;height:2.0px;background:#000;"></div>
<div class="a" style="left:976px;top:880px;width:812px;height:48px;background:#fff;border:2px solid #a9a9a9;box-sizing:border-box;"></div>
<div class="t" style="left:994.26px;top:892.74px;font-size:25.582px;line-height:25.582px;color:#000;font-weight:normal;font-style:normal;transform:scaleX(0.9442);">=COUNTIF($A$2:$A$12, B2)&gt;0</div>
<div class="a" style="left:1740px;top:883px;width:45px;height:43px;background:#f8f8f8;border:2px solid #d6d6d6;border-radius:6px;box-sizing:border-box"></div>
<svg class="a" style="left:1752px;top:889px;" width="20" height="26" viewBox="0 0 20 26"><path d="M9.5 0 L19 10 L13 10 L13 19 L6 19 L6 10 L0 10Z" fill="#000"/><rect x="0" y="22" width="19" height="3.5" fill="#000"/></svg>
<div class="a" style="left:964.5px;top:970px;width:844.5px;height:2px;background:#c8c8c8;"></div>
<div class="t" style="left:980.10px;top:1048.42px;font-size:27.617px;line-height:27.617px;color:#000;font-weight:bold;font-style:normal;transform:scaleX(0.9015);">Preview:</div>
<div class="a" style="left:1105.4px;top:1013.2px;width:488.29999999999995px;height:96.89999999999986px;background:#fff;border:2px solid #505050;box-sizing:border-box;"></div>
<div class="t" style="left:1245.63px;top:1047.66px;font-size:30.524px;line-height:30.524px;color:#000;font-weight:normal;font-style:normal;transform:scaleX(1.0374);">No Format Set</div>
<div class="a" style="left:1618px;top:1035px;width:167px;height:53px;background:#fbfbfb;border:2px solid #d4d4d4;border-radius:7px;box-sizing:border-box"></div>
<div class="t" style="left:1651.52px;top:1048.96px;font-size:25.436px;line-height:25.436px;color:#000;font-weight:normal;font-style:normal;transform:scaleX(0.9884);">Format...</div>
<div class="a" style="left:1653.5px;top:1073.5px;width:11.5px;height:2.0px;background:#000;"></div>
<div class="a" style="left:1438px;top:1135px;width:167px;height:54px;background:#fbfbfb;border:2px solid #d4d4d4;border-bottom:2px solid #0067c0;border-radius:7px;box-sizing:border-box"></div>
<div class="t" style="left:1504.56px;top:1150.18px;font-size:24.710px;line-height:24.710px;color:#000;font-weight:normal;font-style:normal;transform:scaleX(0.9428);">OK</div>
<div class="a" style="left:1632px;top:1135.5px;width:166px;height:53px;background:#fdfdfd;border:2px solid #d4d4d4;border-radius:7px;box-sizing:border-box"></div>
<div class="t" style="left:1678.82px;top:1150.18px;font-size:24.710px;line-height:24.710px;color:#000;font-weight:normal;font-style:normal;transform:scaleX(0.9757);">Cancel</div>
<svg class="a" style="left:1795px;top:1102px;" width="28" height="40" viewBox="0 0 28 40"><path d="M2 1.5 L2 30 L8.5 24.5 L13 35 L16.5 33.5 L12.5 23.5 L22 23.5 Z" fill="rgba(255,255,255,.85)" stroke="#222" stroke-width="1.4" stroke-linejoin="round"/></svg>
<div class="rb" style="left:141px;top:10px;width:137px;height:78px;border-width:4px"></div>
<div class="rb" style="left:1211px;top:83px;width:412.5px;height:80px;border-width:4px"></div>
<div class="rb" style="left:954.6px;top:236.8px;width:305.19999999999993px;height:67.69999999999999px;border-width:4px"></div>
<div class="rb" style="left:483.5px;top:522.5px;width:428.0px;height:699.2px;border-width:4px"></div>
<div class="rb" style="left:958.5px;top:676.6px;width:613.5px;height:59.69999999999993px;border-width:4px"></div>
<div class="rb" style="left:976.3px;top:875.8px;width:363.10000000000014px;height:52.80000000000007px;border-width:4px"></div>
<div class="rb" style="left:1623.8px;top:1038.5px;width:144.20000000000005px;height:50.200000000000045px;border-width:4px"></div>
<div class="rb" style="left:1438px;top:1134.8px;width:162px;height:63.0px;border-width:4px"></div>
<div class="badge" style="left:395.1px;top:613.9px;width:57px;height:57px;"></div>
<div class="t" style="left:413.60px;top:624.86px;font-size:34.884px;line-height:34.884px;color:#fff;font-weight:normal;font-style:normal;">1</div>
<div class="badge" style="left:172.0px;top:77.8px;width:57px;height:57px;"></div>
<div class="t" style="left:191.00px;top:88.76px;font-size:34.884px;line-height:34.884px;color:#fff;font-weight:normal;font-style:normal;">2</div>
<div class="badge" style="left:1146.0px;top:84.7px;width:57px;height:57px;"></div>
<div class="t" style="left:1165.00px;top:95.66px;font-size:34.884px;line-height:34.884px;color:#fff;font-weight:normal;font-style:normal;">3</div>
<div class="badge" style="left:1271.2px;top:245.8px;width:57px;height:57px;"></div>
<div class="t" style="left:1289.80px;top:255.44px;font-size:36.195px;line-height:36.195px;color:#fff;font-weight:bold;font-style:normal;font-family:'Liberation Serif',serif;">4</div>
<div class="badge" style="left:1592.2px;top:666.5px;width:57px;height:57px;"></div>
<div class="t" style="left:1611.20px;top:676.70px;font-size:35.890px;line-height:35.890px;color:#fff;font-weight:normal;font-style:normal;font-family:'Liberation Serif',serif;">5</div>
<div class="badge" style="left:1375.1px;top:881.7px;width:57px;height:57px;"></div>
<div class="t" style="left:1393.60px;top:890.87px;font-size:35.737px;line-height:35.737px;color:#fff;font-weight:normal;font-style:normal;font-family:'Liberation Serif',serif;">6</div>
<div class="badge" style="left:1656.8px;top:973.3px;width:57px;height:57px;"></div>
<div class="t" style="left:1675.80px;top:984.26px;font-size:34.884px;line-height:34.884px;color:#fff;font-weight:normal;font-style:normal;">7</div>
<div class="badge" style="left:1357.5px;top:1136.0px;width:57px;height:57px;"></div>
<div class="t" style="left:1376.50px;top:1146.96px;font-size:34.884px;line-height:34.884px;color:#fff;font-weight:normal;font-style:normal;">8</div></body></html>
